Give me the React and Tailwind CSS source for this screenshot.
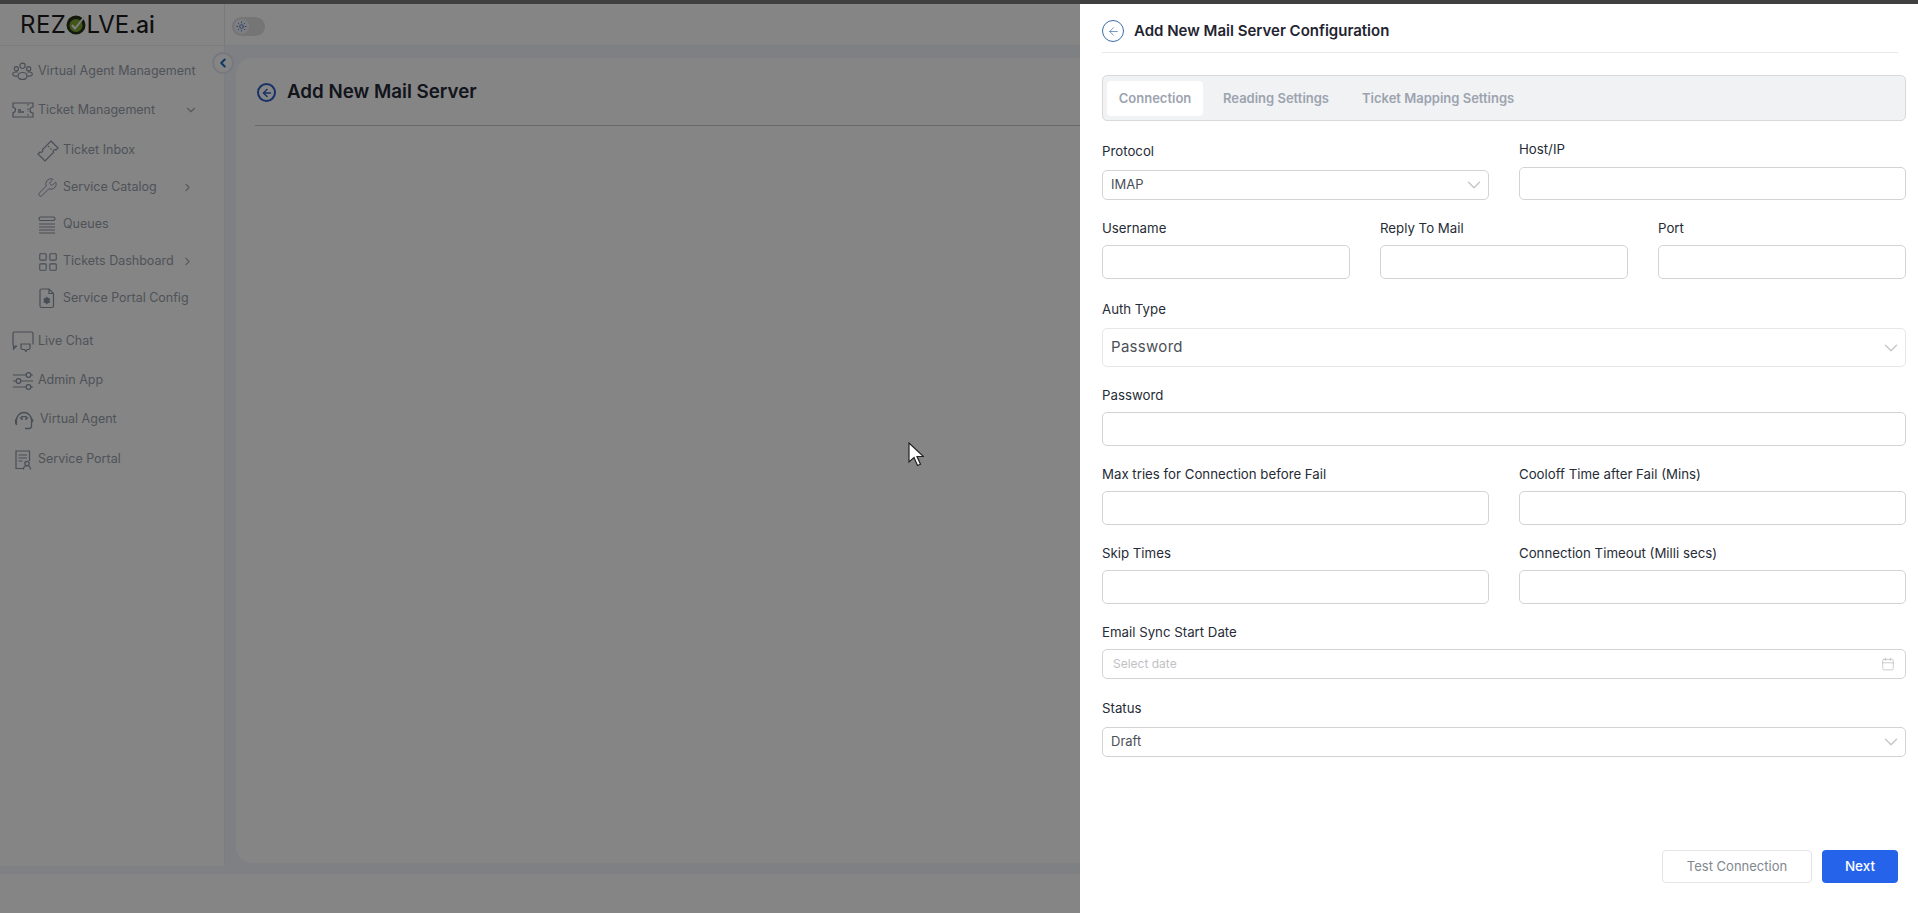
import { ArrowLeft, ChevronDown, ChevronLeft, ChevronRight, Calendar, Sun, Wrench, LayoutGrid } from "lucide-react";

const iconClass = "text-[#8b95a5]";

const PeopleIcon = () => (
  <svg width="21" height="19" viewBox="0 0 22 20" fill="none" stroke="currentColor" strokeWidth="1.2" className={iconClass}>
    <circle cx="11" cy="4" r="2.8" />
    <circle cx="4.5" cy="7" r="2.2" />
    <circle cx="17.5" cy="7" r="2.2" />
    <path d="M7 12.5c1-2 7-2 8 0 1 1 1 4-.5 5-2 1-5 1-7 0-1.5-1-1.500-4-.5-5Z" />
    <path d="M6 10.500c-3-.5-5.500.5-5.300 2.500.2 1.700 2.800 2.200 5.300 1.700M16 10.500c3-.5 5.500.5 5.300 2.500-.2 1.700-2.800 2.200-5.300 1.700" />
  </svg>
);

const TicketWideIcon = () => (
  <svg width="22" height="16" viewBox="0 0 22 16" fill="none" stroke="currentColor" strokeWidth="1.2" className={iconClass}>
    <path d="M1 1h20v4a3 3 0 0 0 0 6v4H1v-4.500a2.500 2.500 0 0 0 0-5Z" />
    <path d="M6 10h6M6 8h3" strokeWidth="1.600" />
    <path d="M16 2v2M16 6.500v3M16 12v2" strokeDasharray="1.500 1" />
  </svg>
);

const TicketTiltIcon = () => (
  <svg width="22" height="22" viewBox="0 0 22 22" fill="none" stroke="currentColor" strokeWidth="1.200" className={iconClass}>
    <path d="M14 1l7 7-2 2a1.800 1.800 0 0 0-2.500 2.500L8 21l-7-7 2-2a1.800 1.800 0 0 0 2.500-2.500Z" />
    <path d="M11 6l1 1M13.500 8.500l1 1" />
  </svg>
);

const QueuesIcon = () => (
  <svg width="20" height="18" viewBox="0 0 20 18" fill="none" stroke="currentColor" strokeWidth="1.100" className={iconClass}>
    <rect x="2" y="1" width="16" height="3.500" rx="1.700" />
    <path d="M2 8h16M2 11h16M2 14h16M2 17h16" />
  </svg>
);

const ConfigIcon = () => (
  <svg width="20" height="21" viewBox="0 0 20 21" fill="none" stroke="currentColor" strokeWidth="1.200" className={iconClass}>
    <path d="M4.500 1H12l4.500 4.500V18a1.500 1.500 0 0 1-1.500 1.500H4.500A1.500 1.500 0 0 1 3 18V2.500A1.500 1.500 0 0 1 4.500 1Z" />
    <path d="M12 1v4.500h4.500" />
    <circle cx="9.800" cy="12.500" r="2.300" fill="currentColor" />
    <path d="M9.800 8.800v1.400M9.800 14.800v1.400M6.500 10.700l1.200.7M11.900 13.600l1.200.7M6.500 14.300l1.200-.7M11.900 11.400l1.200-.7" />
  </svg>
);

const ChatIcon = () => (
  <svg width="22" height="21" viewBox="0 0 22 21" fill="none" stroke="currentColor" strokeWidth="1.200" className={iconClass}>
    <path d="M5 15H2.500A1.500 1.500 0 0 1 1 13.500v-11A1.500 1.500 0 0 1 2.500 1h17A1.500 1.500 0 0 1 21 2.500v11" />
    <path d="M1.500 15v3l3-3" />
    <path d="M9 13h9v4a1.500 1.500 0 0 1-1.500 1.500H15l-1 2-1.500-2h-2A1.500 1.500 0 0 1 9 17Z" />
  </svg>
);

const SlidersIcon = () => (
  <svg width="22" height="20" viewBox="0 0 22 20" fill="none" stroke="currentColor" strokeWidth="1.200" className={iconClass}>
    <path d="M1 4h13M19 4h2M1 10h3M9 10h12M1 16h13M19 16h2" />
    <circle cx="16.500" cy="4" r="2.400" />
    <circle cx="6.500" cy="10" r="2.400" />
    <circle cx="16.500" cy="16" r="2.400" />
  </svg>
);

const HeadsetIcon = () => (
  <svg width="20" height="20" viewBox="0 0 20 20" fill="none" stroke="currentColor" className={iconClass + " ml-[2px]"}>
    <path d="M2.500 15V10a7.500 7.500 0 0 1 15 0v6c0 1.500-1 2.500-2.500 2.500h-4" strokeWidth="1.300" />
    <path d="M1.500 10c0-1 .5-1.500 1-1.500v6c-1 0-1-1-1-1.500Z M17.500 8.500c1 0 1.300 1 1.300 2s-.3 2-1.300 2Z" fill="currentColor" strokeWidth="1" />
    <path d="M6 8.500a4.800 4.800 0 0 1 8 0" strokeWidth="1.300" />
    <circle cx="8" cy="9" r=".6" fill="currentColor" />
    <circle cx="12" cy="9" r=".6" fill="currentColor" />
  </svg>
);

const PortalIcon = () => (
  <svg width="18" height="20" viewBox="0 0 18 20" fill="none" stroke="currentColor" strokeWidth="1.200" className={iconClass + " ml-[2px]"}>
    <path d="M9 18.500H2V1h13.500v10" />
    <path d="M4.500 5h8.500M4.500 8h8.500M4.500 11h4" />
    <circle cx="13" cy="13.500" r="2.200" />
    <path d="M9.500 19.500c0-5 7-5 7 0" />
  </svg>
);

const subIcons = {
  "Ticket Inbox": <TicketTiltIcon />,
  "Service Catalog": <Wrench size={21} strokeWidth={1.1} className={iconClass} />,
  Queues: <QueuesIcon />,
  "Tickets Dashboard": <LayoutGrid size={22} strokeWidth={1.2} className={iconClass} />,
  "Service Portal Config": <ConfigIcon />,
};

const NavItem = ({ icon, label, chevron, className, textClass = "" }) => (
  <div className={"flex items-center pl-[12px] pr-[26px] " + className}>
    <span className="w-[26px] flex shrink-0">{icon}</span>
    <span className={"text-[12.5px] text-[#98a0ab] whitespace-nowrap " + textClass}>{label}</span>
    {chevron && <ChevronDown size={14} className="ml-auto text-[#a5acb6]" />}
  </div>
);

const SubItem = ({ label, chevron }) => (
  <div className="flex items-center h-[37px] pl-[37px] pr-[30px]">
    <span className="w-[26px] flex shrink-0">{subIcons[label]}</span>
    <span className="text-[12.5px] text-[#98a0ab] whitespace-nowrap">{label}</span>
    {chevron && <ChevronRight size={13} className="ml-auto text-[#a5acb6]" />}
  </div>
);

const Sidebar = () => (
  <aside className="w-[225px] shrink-0 border-r border-[#eef0f4] bg-white pt-[6px] h-[820px]">
    <NavItem icon={<PeopleIcon />} label="Virtual Agent Management" className="h-[38px]" />
    <NavItem icon={<TicketWideIcon />} label="Ticket Management" chevron className="h-[40px]" />
    <div className="mt-[2px]">
      <SubItem label="Ticket Inbox" />
      <SubItem label="Service Catalog" chevron />
      <SubItem label="Queues" />
      <SubItem label="Tickets Dashboard" chevron />
      <SubItem label="Service Portal Config" />
    </div>
    <div className="mt-[4px]">
      <NavItem icon={<ChatIcon />} label="Live Chat" className="h-[40px]" />
      <NavItem icon={<SlidersIcon />} label="Admin App" className="h-[39px]" />
      <NavItem icon={<HeadsetIcon />} label="Virtual Agent" className="h-[39px]" textClass="ml-[2px]" />
      <NavItem icon={<PortalIcon />} label="Service Portal" className="h-[41px]" />
    </div>
  </aside>
);

const Logo = () => (
  <div className="flex items-center text-[24px] leading-none text-[#1c1c1c] font-normal ml-[20px]">
    <span className="tracking-[.5px]">REZ</span>
    <svg width="22" height="22" viewBox="0 0 22 22" className="mx-[-1px]">
      <circle cx="11" cy="11" r="9.500" fill="#26331a" />
      <circle cx="11" cy="11.500" r="6.500" fill="#7da62e" />
      <path d="M7 11l3 3.500L20 2" fill="none" stroke="#f2f2f2" strokeWidth="2" />
    </svg>
    <span className="tracking-[-.1px]">LVE.<span className="font-medium text-[23px]">ai</span></span>
  </div>
);

const Field = ({ label, className, children }) => (
  <div className={"flex flex-col " + className}>
    <label className="text-[13.25px] leading-[20px] text-[#262b36] font-normal">{label}</label>
    {children}
  </div>
);

const Input = ({ h = "h-[34px]" }) => (
  <input className={"w-full rounded-[5px] border border-[#d1d3d6] bg-white " + h} />
);

const Select = ({ value, className = "h-[30px] text-[13px] border-[#d1d3d6]" }) => (
  <div className={"w-full flex items-center justify-between rounded-[5px] border bg-white pl-[8px] pr-[3px] text-[#4b5058] " + className}>
    {value}
    <ChevronDown size={22} strokeWidth={1.5} className="text-[#c4c6ca]" />
  </div>
);

const Drawer = () => (
  <section className="absolute right-0 top-0 bottom-0 w-[838px] bg-white pl-[22px] pr-[12px] flex flex-col">
    <header className="flex items-center gap-[10px] h-[49px] pt-[6px] mr-[8px] border-b border-[#e8e9eb]">
      <span className="w-[22px] h-[22px] rounded-full border border-[#3d6ea8] flex items-center justify-center">
        <ArrowLeft size={13} strokeWidth={1.3} className="text-[#3d6ea8]" />
      </span>
      <h2 className="text-[15px] font-semibold text-[#1f2430]">Add New Mail Server Configuration</h2>
    </header>

    <div className="mt-[22px] h-[46px] pt-[1px] rounded-[5px] border border-[#d7d9dc] bg-[#f1f2f4] flex items-center pl-[4px] text-[13px] font-semibold text-[#9ca3af]">
      <span className="h-[35px] w-[96px] flex items-center justify-center rounded-[4px] bg-white">Connection</span>
      <span className="ml-[20px]">Reading Settings</span>
      <span className="ml-[33px]">Ticket Mapping Settings</span>
    </div>

    <div className="flex gap-[30px] mt-[18px]">
      <Field label="Protocol" className="flex-1 pt-[2px] gap-[9px]"><Select value="IMAP" /></Field>
      <Field label="Host/IP" className="flex-1 gap-[8px]"><Input h="h-[33px]" /></Field>
    </div>

    <div className="flex gap-[30px] mt-[18px]">
      <Field label="Username" className="flex-1 gap-[7px]"><Input /></Field>
      <Field label="Reply To Mail" className="flex-1 gap-[7px]"><Input /></Field>
      <Field label="Port" className="flex-1 gap-[7px]"><Input /></Field>
    </div>

    <Field label="Auth Type" className="mt-[20px] gap-[9px]">
      <Select value="Password" className="h-[39px] text-[15px] tracking-[.3px] border-[#e6e7ea]" />
    </Field>
    <Field label="Password" className="mt-[18px] gap-[7px]"><Input /></Field>

    <div className="flex gap-[30px] mt-[18px]">
      <Field label="Max tries for Connection before Fail" className="flex-1 gap-[7px]"><Input /></Field>
      <Field label="Cooloff Time after Fail (Mins)" className="flex-1 gap-[7px]"><Input /></Field>
    </div>
    <div className="flex gap-[30px] mt-[18px]">
      <Field label="Skip Times" className="flex-1 gap-[7px]"><Input /></Field>
      <Field label="Connection Timeout (Milli secs)" className="flex-1 gap-[7px]"><Input /></Field>
    </div>

    <Field label="Email Sync Start Date" className="mt-[18px] gap-[7px]">
      <div className="h-[30px] flex items-center justify-between rounded-[5px] border border-[#d1d3d6] pl-[10px] pr-[10px] text-[12px] text-[#bfc1c5]">
        Select date
        <Calendar size={14} strokeWidth={1.2} className="text-[#b5b7bb]" />
      </div>
    </Field>
    <Field label="Status" className="mt-[19px] gap-[9px]"><Select value="Draft" /></Field>

    <footer className="mt-auto mb-[30px] mr-[8px] flex justify-end gap-[10px]">
      <button className="w-[150px] h-[33px] rounded-[4px] border border-[#e3e5e8] text-[13px] text-[#82878f]">Test Connection</button>
      <button className="w-[76px] h-[33px] rounded-[4px] bg-[#2563eb] text-[13.5px] font-medium text-white">Next</button>
    </footer>
  </section>
);

export default function App() {
  return (
    <div className="h-screen w-full overflow-hidden flex flex-col font-['Inter',sans-serif] bg-white">
      <div className="h-[4px] bg-[#404040] shrink-0" />
      <div className="relative flex-1 overflow-hidden">
        <div className="h-[42px] flex items-center border-b border-[#eef0f4]">
          <div className="w-[225px] h-full flex items-center border-r border-[#e6e8ec]"><Logo /></div>
          <div className="ml-[7px] mt-[3px] w-[33px] h-[19px] rounded-full bg-[#e0e0e2] flex items-center pl-[2px]">
            <span className="w-[15px] h-[15px] rounded-full bg-[#eef1f8] flex items-center justify-center">
              <Sun size={11} className="text-[#5b7fc7]" />
            </span>
          </div>
        </div>

        <div className="flex h-[828px] bg-[#f3f5fc]">
          <Sidebar />
          <main className="flex-1 pt-[12px] pl-[11px]">
            <div className="h-[805px] bg-white rounded-l-[16px] pl-[19px]">
              <div className="h-[68px] pt-[2px] flex items-center gap-[11px] border-b border-[#c9cbd0]">
                <span className="ml-[2px] w-[19px] h-[19px] rounded-full border-2 border-[#2c5fc8] flex items-center justify-center">
                  <ArrowLeft size={12} strokeWidth={3} className="text-[#2c5fc8]" />
                </span>
                <h1 className="text-[18.75px] font-semibold text-[#242936]">Add New Mail Server</h1>
              </div>
            </div>
          </main>
        </div>

        <button className="absolute left-[212px] top-[48px] w-[22px] h-[22px] rounded-full bg-white border-2 border-[#e3e9f4] flex items-center justify-center">
          <ChevronLeft size={14} strokeWidth={3.5} className="text-[#1d6fb8]" />
        </button>

        {/* backdrop behind the drawer */}
        <div className="absolute inset-0 bg-black/[.48]" />
        <svg width="16" height="26" viewBox="0 0 16 26" className="absolute left-[908px] top-[438px]">
          <path d="M1 1v19l5-4.500 3.500 8 3-1.300-3.500-7.700h6.500Z" fill="#fff" stroke="#222" strokeWidth="1.200" />
        </svg>
        <Drawer />
      </div>
    </div>
  );
}
